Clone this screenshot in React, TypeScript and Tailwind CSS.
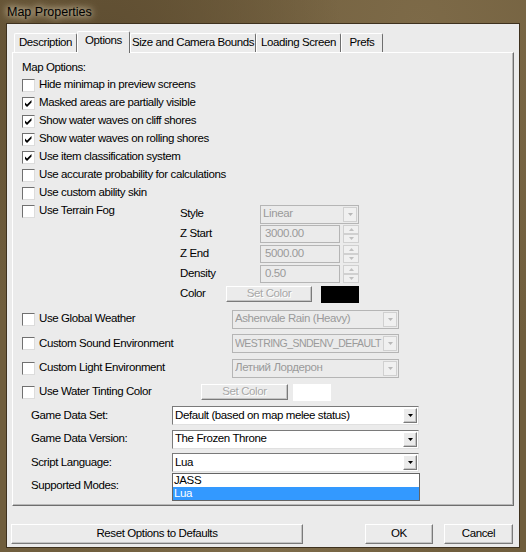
import React from 'react';

const font = "font-['Liberation_Sans',Arial,sans-serif]";

const raised =
  'border border-t-white border-l-white border-r-[#7a7a7a] border-b-[#7a7a7a] shadow-[inset_-1px_-1px_0_#c4c4c4]';

const TriDown = ({ color = '#000' }: { color?: string }) => (
  <svg width="5" height="3" viewBox="0 0 5 3">
    <path d="M0 0h5L2.5 3z" fill={color} />
  </svg>
);

const TriUp = ({ color = '#000' }: { color?: string }) => (
  <svg width="5" height="3" viewBox="0 0 5 3">
    <path d="M0 3h5L2.5 0z" fill={color} />
  </svg>
);

const Box = ({ checked }: { checked?: boolean }) => (
  <span className="w-[13px] h-[13px] shrink-0 bg-white border border-t-[#707070] border-l-[#707070] border-r-[#dcdcdc] border-b-[#dcdcdc] flex items-center justify-center">
    {checked && (
      <svg width="11" height="11" viewBox="0 0 11 11">
        <path d="M2 4.5l2 2 4.5-4.5v2.6L4 9.1 2 7.1z" fill="#000" />
      </svg>
    )}
  </span>
);

const Check = ({ checked, label }: { checked?: boolean; label: string }) => (
  <div className="flex items-center h-[18px] gap-[4px]">
    <Box checked={checked} />
    <span>{label}</span>
  </div>
);

const DisabledSelect = ({ value, w, tight }: { value: string; w: string; tight?: boolean }) => (
  <div className={`${w} h-[19px] border border-[#b5b5b5] bg-[#ebebeb] flex items-center pl-[2px] pr-[1px]`}>
    <span
      className={`flex-1 text-[#9a9a9a] whitespace-nowrap overflow-hidden ${
        tight ? 'text-[10.5px] tracking-[-0.55px]' : ''
      }`}
    >
      {value}
    </span>
    <span className="w-[14px] h-[15px] shrink-0 border border-[#d0d0d0] bg-[#f0f0f0] flex items-center justify-center">
      <TriDown color="#b8b8b8" />
    </span>
  </div>
);

const Spin = ({ value }: { value: string }) => (
  <div className="flex items-center gap-[3px]">
    <div className="w-[80px] h-[18px] border border-[#b5b5b5] bg-[#ebebeb] flex items-center pl-[4px] text-[#9a9a9a]">
      {value}
    </div>
    <div className="w-[16px] h-[18px] flex flex-col">
      <span className="flex-1 border border-[#d0d0d0] bg-[#f0f0f0] flex items-center justify-center">
        <TriUp color="#c0c0c0" />
      </span>
      <span className="flex-1 border border-[#d0d0d0] bg-[#f0f0f0] flex items-center justify-center">
        <TriDown color="#c0c0c0" />
      </span>
    </div>
  </div>
);

const SetColor = ({ w }: { w: string }) => (
  <div className={`${w} h-[16px] ${raised} flex items-center justify-center text-[#a8a8a8] [text-shadow:1px_1px_0_#fff]`}>
    Set Color
  </div>
);

const Select = ({ value }: { value: string }) => (
  <div className="w-[247px] h-[19px] bg-white border border-t-[#7a7a7a] border-l-[#7a7a7a] border-r-[#e0e0e0] border-b-[#e0e0e0] flex items-center pl-[2px] pr-[1px]">
    <span className="flex-1 whitespace-nowrap">{value}</span>
    <span className={`w-[14px] h-[15px] bg-[#ebebeb] ${raised} flex items-center justify-center`}>
      <TriDown />
    </span>
  </div>
);

const Tab = ({ label, w, active }: { label: string; w: string; active?: boolean }) => (
  <div
    className={`${w} ${
      active ? 'h-[22px] -mb-px z-10 pb-[3px]' : 'h-[19px]'
    } bg-[#ebebeb] border-t border-l border-white border-r border-r-[#6e6e6e] rounded-t-[2px] flex items-center justify-center whitespace-nowrap`}
  >
    {label}
  </div>
);

export default function App() {
  return (
    <div
      className={`w-[526px] h-[552px] overflow-hidden ${font} text-[11.5px] tracking-[-0.4px] text-black bg-[#705e3d] bg-[radial-gradient(ellipse_at_20%_10%,#5e4d31_0%,transparent_40%),radial-gradient(ellipse_at_80%_5%,#7d6a48_0%,transparent_45%),radial-gradient(ellipse_at_50%_100%,#7e6c4a_0%,transparent_50%)] flex flex-col`}
    >
      <div className="h-[24px] flex items-center pl-[7px] text-[12.5px] tracking-normal [text-shadow:0_0_6px_#e8dcc0,0_0_10px_#d8ccb0]">
        Map Properties
      </div>

      <div className="mx-[7px] w-[512px] h-[523px] bg-[#ebebeb] shadow-[0_0_0_1px_#3e311e] flex flex-col">
        <div className="flex items-end pt-[6px] pl-[7px] h-[28px]">
          <Tab label="Description" w="w-[63px]" />
          <Tab label="Options" w="w-[53px]" active />
          <Tab label="Size and Camera Bounds" w="w-[126px]" />
          <Tab label="Loading Screen" w="w-[85px]" />
          <Tab label="Prefs" w="w-[42px]" />
        </div>

        <div className="relative ml-[5px] w-[502px] h-[454px] border border-t-white border-l-white border-r-[#6e6e6e] border-b-[#6e6e6e] shadow-[inset_-1px_-1px_0_#b8b8b8] pt-[7px] pl-[9px] flex flex-col">
          <div className="h-[16px] flex items-center">Map Options:</div>
          <Check label="Hide minimap in preview screens" />
          <Check checked label="Masked areas are partially visible" />
          <Check checked label="Show water waves on cliff shores" />
          <Check checked label="Show water waves on rolling shores" />
          <Check checked label="Use item classification system" />
          <Check label="Use accurate probability for calculations" />
          <Check label="Use custom ability skin" />

          <div className="flex">
            <div className="w-[158px]">
              <Check label="Use Terrain Fog" />
            </div>
            <div className="pt-[2px] flex flex-col">
              <div className="h-[20px] flex items-center">
                <span className="w-[80px]">Style</span>
                <DisabledSelect value="Linear" w="w-[99px]" />
              </div>
              <div className="h-[20px] flex items-center">
                <span className="w-[80px]">Z Start</span>
                <Spin value="3000.00" />
              </div>
              <div className="h-[20px] flex items-center">
                <span className="w-[80px]">Z End</span>
                <Spin value="5000.00" />
              </div>
              <div className="h-[20px] flex items-center">
                <span className="w-[80px]">Density</span>
                <Spin value="0.50" />
              </div>
              <div className="h-[20px] flex items-center">
                <span className="w-[46px]">Color</span>
                <SetColor w="w-[86px]" />
                <span className="ml-[9px] w-[38px] h-[17px] bg-black" />
              </div>
            </div>
          </div>

          <div className="mt-[3px] h-[24px] flex items-center">
            <div className="w-[210px]">
              <Check label="Use Global Weather" />
            </div>
            <DisabledSelect value="Ashenvale Rain (Heavy)" w="w-[167px]" />
          </div>
          <div className="h-[25px] flex items-center">
            <div className="w-[210px]">
              <Check label="Custom Sound Environment" />
            </div>
            <DisabledSelect value="WESTRING_SNDENV_DEFAULT" w="w-[167px]" tight />
          </div>
          <div className="h-[24px] flex items-center">
            <div className="w-[210px]">
              <Check label="Custom Light Environment" />
            </div>
            <DisabledSelect value="Летний Лордерон" w="w-[167px]" />
          </div>
          <div className="h-[24px] flex items-center">
            <div className="w-[179px]">
              <Check label="Use Water Tinting Color" />
            </div>
            <SetColor w="w-[87px]" />
            <span className="ml-[5px] w-[38px] h-[17px] bg-white" />
          </div>

          <div className="h-[23px] flex items-center pl-[9px]">
            <span className="w-[141px]">Game Data Set:</span>
            <Select value="Default (based on map melee status)" />
          </div>
          <div className="h-[24px] flex items-center pl-[9px]">
            <span className="w-[141px]">Game Data Version:</span>
            <Select value="The Frozen Throne" />
          </div>
          <div className="h-[23px] flex items-center pl-[9px]">
            <span className="w-[141px]">Script Language:</span>
            <Select value="Lua" />
          </div>
          <div className="h-[23px] flex items-center pl-[9px]">
            <span className="w-[141px]">Supported Modes:</span>
          </div>

          <div className="absolute left-[159px] top-[420px] w-[248px] h-[28px] bg-white border border-[#646464] flex flex-col">
            <div className="h-[13px] leading-[13px] pl-[1px]">JASS</div>
            <div className="h-[13px] leading-[13px] pl-[1px] bg-[#3399ff] text-white">Lua</div>
          </div>
        </div>

        <div className="mt-[18px] flex items-center pl-[4px] pr-[6px]">
          <div className={`w-[292px] h-[20px] ${raised} flex items-center justify-center`}>
            Reset Options to Defaults
          </div>
          <div className="flex-1" />
          <div className={`w-[68px] h-[20px] ${raised} flex items-center justify-center`}>OK</div>
          <div className={`ml-[11px] w-[69px] h-[20px] ${raised} flex items-center justify-center`}>Cancel</div>
        </div>
      </div>
    </div>
  );
}
